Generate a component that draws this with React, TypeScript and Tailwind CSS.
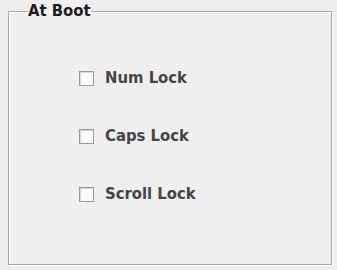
const options = ["Num Lock", "Caps Lock", "Scroll Lock"];

function Check({ label }: { label: string }) {
  return (
    <label className="flex items-center gap-[11px] h-[20px]">
      <span className="w-[15px] h-[15px] border border-[#9a9a9a] bg-[#fafafa] shadow-[inset_1px_1px_0_#d8d8d8]" />
      <span className="text-[16.5px] leading-none font-bold text-[#454545]">{label}</span>
    </label>
  );
}

export default function App() {
  return (
    <div
      className="w-[337px] h-[270px] bg-[#efefef] pl-[8px] pr-[5px] pt-[2px]"
      style={{ fontFamily: '"DejaVu Sans Condensed", "DejaVu Sans", sans-serif' }}
    >
      <fieldset className="h-[263px] border border-[#a9a9a9] shadow-[1px_1px_0_#ffffff,inset_1px_1px_0_#ffffff] px-[19px] m-0 min-w-0">
        <legend className="text-[16.5px] leading-[18px] text-[#1e1e1e] px-0 font-bold">At Boot</legend>
        <div className="flex flex-col gap-[38px] pl-[51px] pt-[48px]">
          {options.map((o) => (
            <Check key={o} label={o} />
          ))}
        </div>
      </fieldset>
    </div>
  );
}
